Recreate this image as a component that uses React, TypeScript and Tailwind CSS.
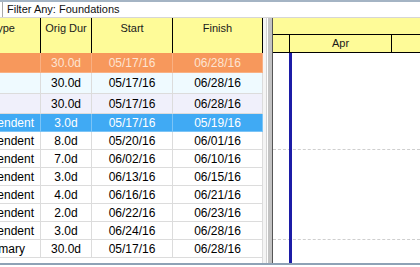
import React from 'react';

type Row = {
  h: string;
  type: string;
  typePad: string;
  dur: string;
  start: string;
  finish: string;
  bg: string;
  text: string;
  line: string;
  dashed?: boolean;
};

const td = 'Task Dependent';

const rows: Row[] = [
  { h: 'h-[20px]', type: '', typePad: 'pr-[6px]', dur: '30.0d', start: '05/17/16', finish: '06/28/16', bg: 'bg-[#f7985c]', text: 'text-[#fde4d2]', line: 'border-[#f9b083]' },
  { h: 'h-[21px]', type: '', typePad: 'pr-[6px]', dur: '30.0d', start: '05/17/16', finish: '06/28/16', bg: 'bg-[#effaff]', text: 'text-black', line: 'border-[#dcdcdc]' },
  { h: 'h-[20px]', type: '', typePad: 'pr-[6px]', dur: '30.0d', start: '05/17/16', finish: '06/28/16', bg: 'bg-[#f0f0fb]', text: 'text-black', line: 'border-[#dcdcdc]' },
  { h: 'h-[18px]', type: td, typePad: 'pr-[6px]', dur: '3.0d', start: '05/17/16', finish: '05/19/16', bg: 'bg-[#40aaf4]', text: 'text-white', line: 'border-[#7cc4f6]' },
  { h: 'h-[18px]', type: td, typePad: 'pr-[6px]', dur: '8.0d', start: '05/20/16', finish: '06/01/16', bg: 'bg-white', text: 'text-black', line: 'border-[#dcdcdc]', dashed: true },
  { h: 'h-[18px]', type: td, typePad: 'pr-[6px]', dur: '7.0d', start: '06/02/16', finish: '06/10/16', bg: 'bg-white', text: 'text-black', line: 'border-[#dcdcdc]' },
  { h: 'h-[18px]', type: td, typePad: 'pr-[6px]', dur: '3.0d', start: '06/13/16', finish: '06/15/16', bg: 'bg-white', text: 'text-black', line: 'border-[#dcdcdc]' },
  { h: 'h-[18px]', type: td, typePad: 'pr-[6px]', dur: '4.0d', start: '06/16/16', finish: '06/21/16', bg: 'bg-white', text: 'text-black', line: 'border-[#dcdcdc]' },
  { h: 'h-[18px]', type: td, typePad: 'pr-[6px]', dur: '2.0d', start: '06/22/16', finish: '06/23/16', bg: 'bg-white', text: 'text-black', line: 'border-[#dcdcdc]' },
  { h: 'h-[18px]', type: td, typePad: 'pr-[6px]', dur: '3.0d', start: '06/24/16', finish: '06/28/16', bg: 'bg-white', text: 'text-black', line: 'border-[#dcdcdc]', dashed: true },
  { h: 'h-[18px]', type: 'WBS Summary', typePad: 'pr-[15px]', dur: '30.0d', start: '05/17/16', finish: '06/28/16', bg: 'bg-white', text: 'text-black', line: 'border-[#dcdcdc]' },
];

export default function App() {
  return (
    <div
      className="w-[420px] h-[267px] bg-white overflow-hidden flex flex-col text-[12px] leading-none text-black"
      style={{ fontFamily: '"Liberation Sans", Arial, sans-serif' }}
    >
      {/* top frame */}
      <div className="h-[2px] bg-[#a4b4c4] shrink-0" />

      {/* filter bar */}
      <div className="h-[16px] shrink-0 flex pl-[2px] border-b border-[#d6d6d6]">
        <div className="flex-1 flex items-center border-l border-[#a8a8a8] pl-[4px] text-[11px] text-[#111]">
          Filter Any: Foundations
        </div>
      </div>

      <div className="flex flex-1 min-h-0">
        {/* activity table */}
        <div className="w-[263px] shrink-0 flex flex-col">
          <div className="h-[35px] shrink-0 flex bg-[#fefb98] text-[#1a1a1a] text-[11px]">
            <div className="w-[41px] border-r border-black overflow-hidden flex justify-end pt-[5px] pr-[25px] whitespace-nowrap">
              Type
            </div>
            <div className="w-[51px] border-r border-black flex justify-center pt-[5px]">Orig Dur</div>
            <div className="w-[81px] border-r border-black flex justify-center pt-[5px]">Start</div>
            <div className="w-[90px] border-r border-black flex justify-center pt-[5px] overflow-hidden">Finish</div>
          </div>

          {rows.map((r, i) => (
            <div key={i} className={`${r.h} shrink-0 flex border-b ${r.line} ${r.bg} ${r.text}`}>
              <div className={`w-[41px] border-r ${r.line} overflow-hidden flex items-center justify-end whitespace-nowrap ${r.typePad}`}>
                {r.type}
              </div>
              <div className={`w-[51px] border-r ${r.line} flex items-center justify-center`}>{r.dur}</div>
              <div className={`w-[81px] border-r ${r.line} flex items-center justify-center`}>{r.start}</div>
              <div className={`w-[90px] border-r ${r.line} flex items-center justify-center overflow-hidden`}>
                {r.finish}
              </div>
            </div>
          ))}
          <div className="flex-1 flex">
            <div className="w-[263px] border-r border-[#dcdcdc]" />
          </div>
        </div>

        {/* splitter */}
        <div className="w-[9px] shrink-0 flex">
          <div className="w-[4px] bg-[#f4f4f4] border-r border-[#d4d4d4]" />
          <div className="w-[1px] bg-white" />
          <div className="w-[4px] bg-[#c3c3c3]" />
        </div>

        {/* gantt */}
        <div className="flex-1 flex flex-col relative border-l border-[#555]">
          <div className="h-[35px] shrink-0 flex flex-col bg-[#fefb98] text-[#1a1a1a] text-[11px]">
            <div className="h-[17px] border-b border-black" />
            <div className="flex-1 flex border-b border-black">
              <div className="w-[17px] border-r border-black" />
              <div className="w-[102px] border-r border-black flex items-center justify-center">Apr</div>
              <div className="flex-1" />
            </div>
          </div>
          {rows.map((r, i) => (
            <div
              key={i}
              className={`${r.h} shrink-0 border-b ${r.dashed ? 'border-dashed border-[#cfcfcf]' : 'border-transparent'}`}
            />
          ))}
          <div className="flex-1" />
          <div className="absolute left-[16px] top-[35px] bottom-0 w-[3px] bg-[#1c1ca6]" />
        </div>
      </div>

      {/* bottom frame */}
      <div className="h-[2px] bg-[#8ea2b6] shrink-0" />
      <div className="h-[2px] bg-white shrink-0" />
    </div>
  );
}
